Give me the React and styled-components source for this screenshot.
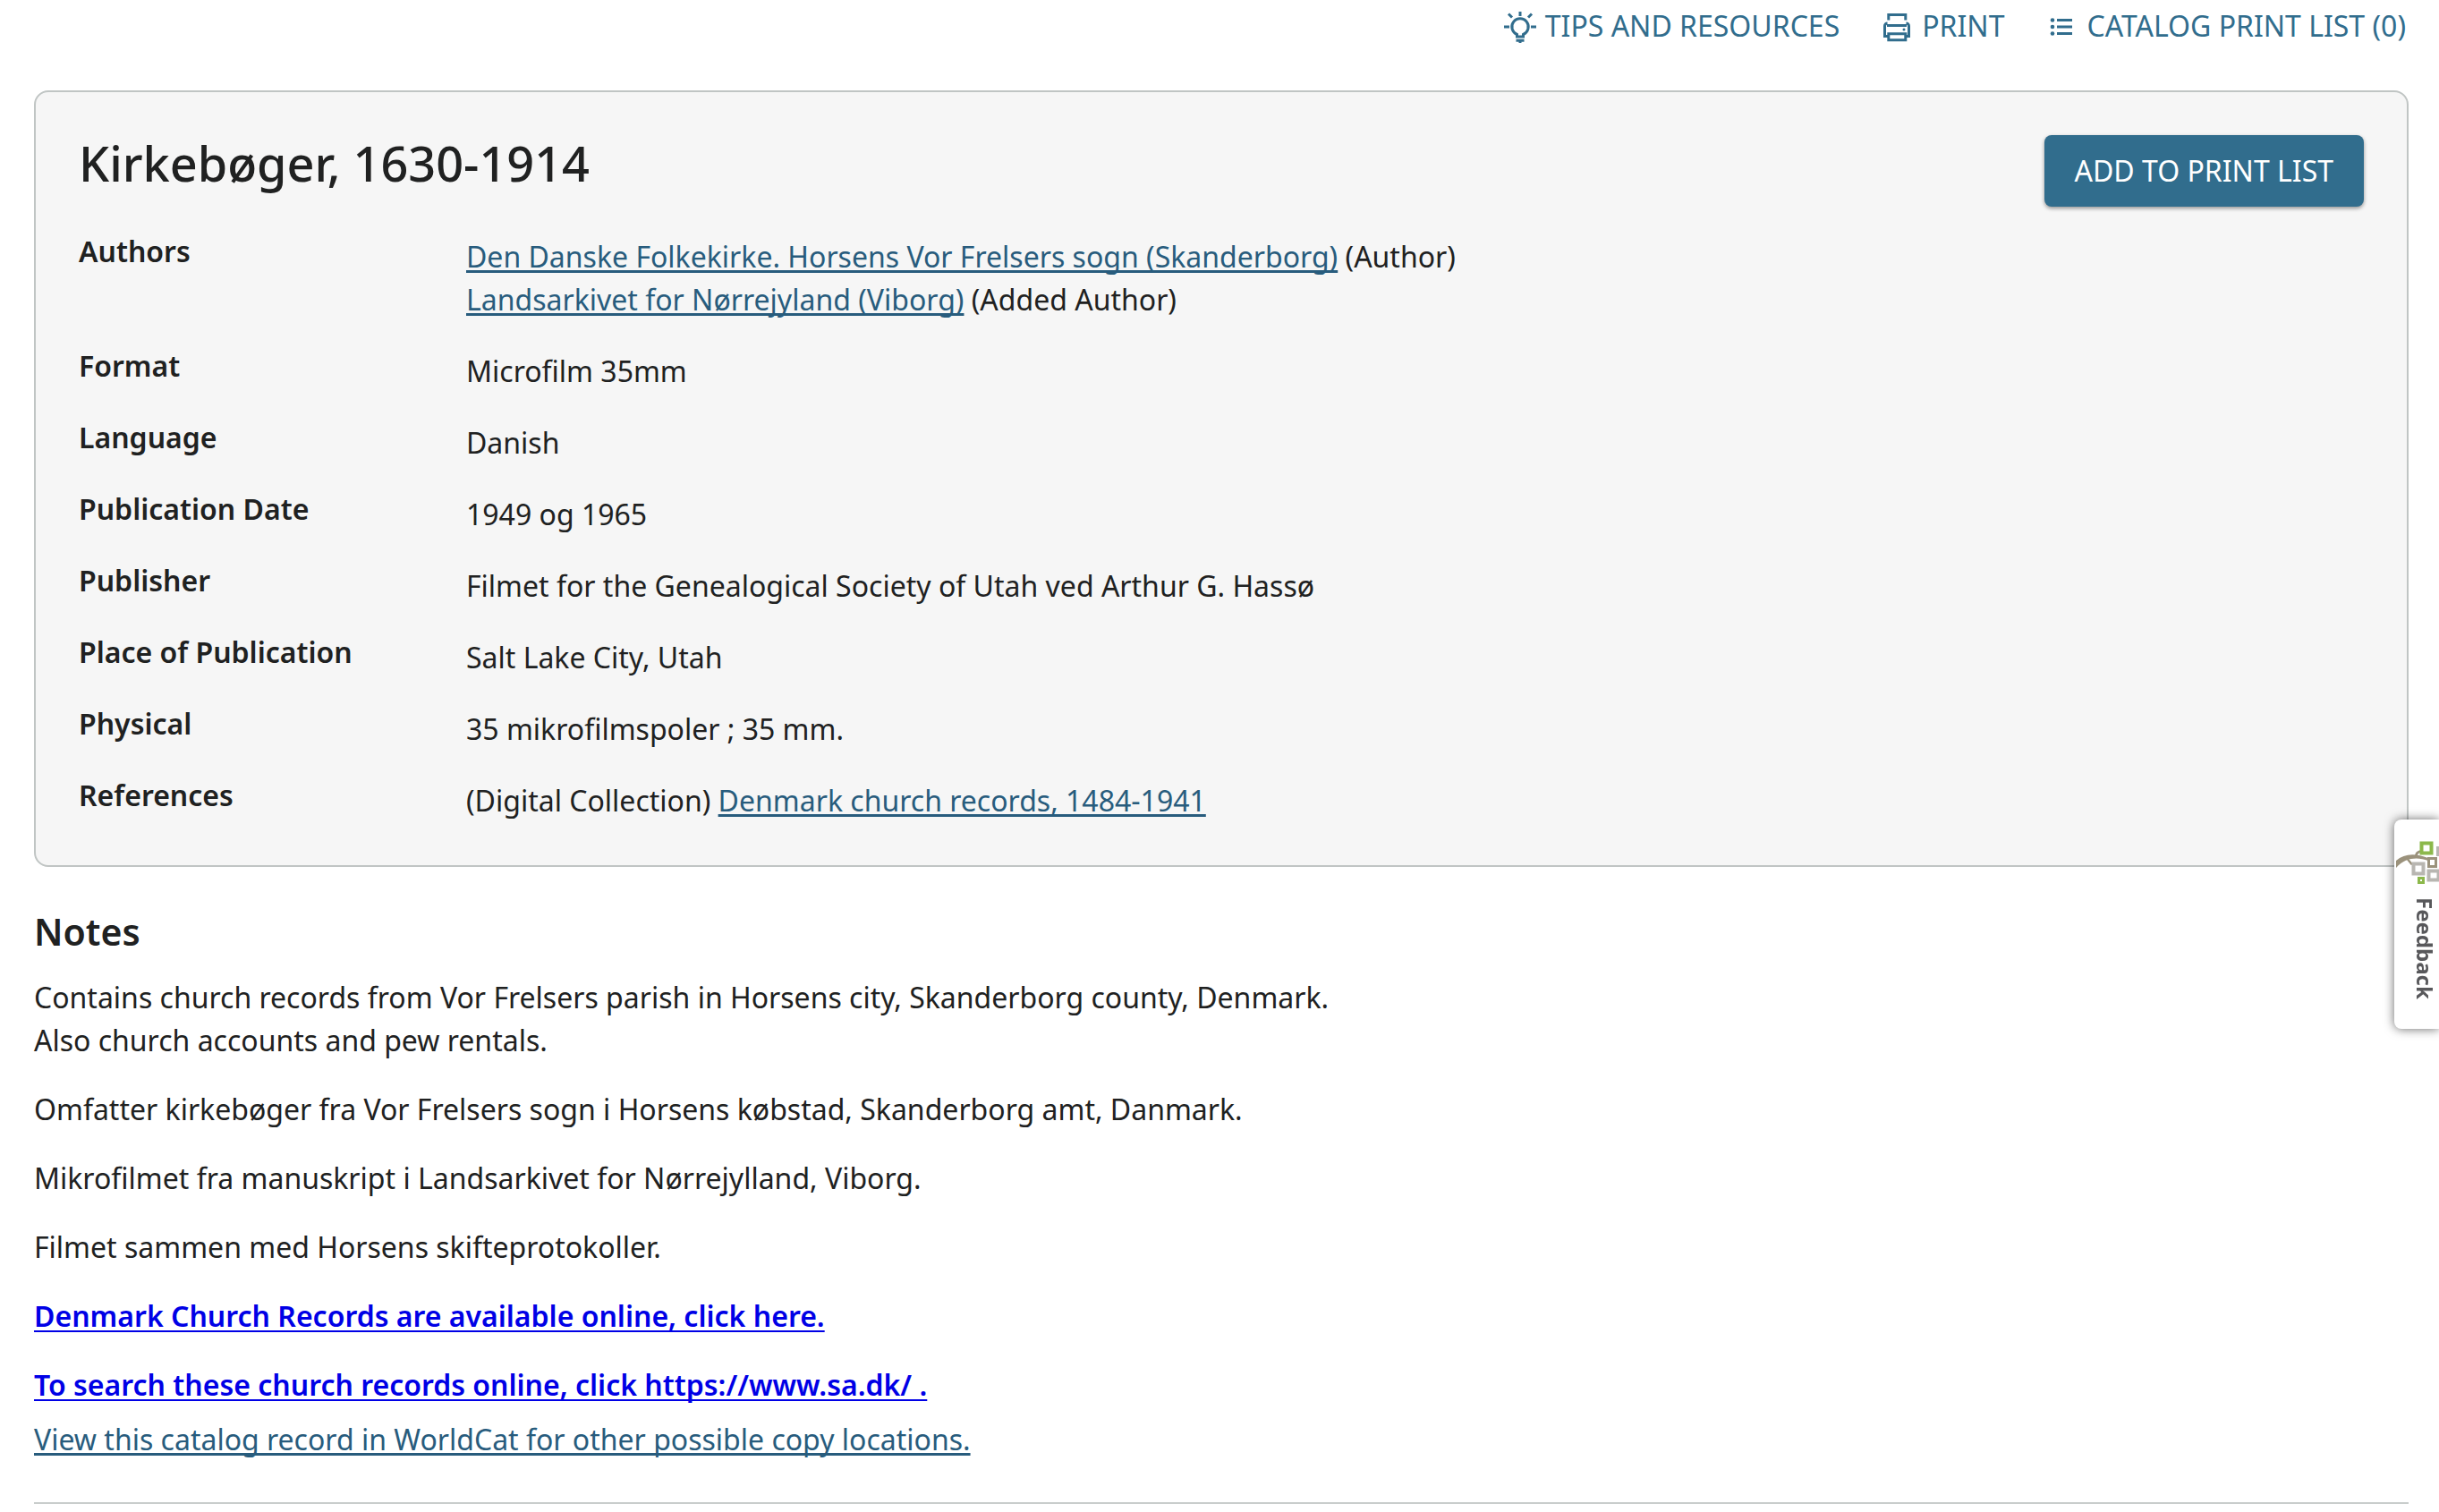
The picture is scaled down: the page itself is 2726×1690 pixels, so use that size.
import React, { useState } from 'react';
import styled, { createGlobalStyle } from 'styled-components';

const GlobalStyle = createGlobalStyle`
    * {
        box-sizing: border-box;
    }

    body {
        margin: 0;
        background: #fff;
        color: #202121;
        font-family: 'Noto Sans', sans-serif;
        font-size: 32px;
        line-height: 48px;
    }
`;

const Page = styled.main`
    padding: 5px 34px 0 38px;
    overflow: hidden;
`;

const Toolbar = styled.nav`
    display: flex;
    justify-content: flex-end;
    gap: 40px;
    margin-bottom: 48px;
    padding-right: 3px;
`;

const ToolbarButton = styled.button`
    display: flex;
    align-items: center;
    gap: 4px;
    padding: 0;
    border: none;
    background: none;
    color: #316d8d;
    font: inherit;
    text-transform: uppercase;
    cursor: pointer;

    svg {
        width: 48px;
        height: 48px;
    }
`;

const Card = styled.section`
    padding: 48px;
    border: 2px solid #c0c5c4;
    border-radius: 16px;
    background: #f6f6f6;
`;

const CardHeader = styled.header`
    display: flex;
    justify-content: space-between;
    align-items: flex-start;
    margin-bottom: 32px;
`;

const Title = styled.h1`
    margin: 0;
    font-size: 54px;
    font-weight: 500;
    line-height: 62px;
`;

const PrimaryButton = styled.button`
    padding: 16px 34px;
    border: none;
    border-radius: 8px;
    background: #316d8d;
    color: #fff;
    font: inherit;
    text-transform: uppercase;
    box-shadow: 0 2px 4px rgba(0, 0, 0, 0.4);
    cursor: pointer;
`;

const Details = styled.dl`
    display: grid;
    gap: 32px;
    margin: 0;
`;

const DetailRow = styled.div`
    display: grid;
    grid-template-columns: 433px 1fr;

    dt {
        font-weight: 600;
        line-height: 36px;
    }

    dd {
        margin: 0;
    }
`;

const Link = styled.a`
    color: #285c7d;
    text-decoration: underline;
    text-decoration-thickness: 3px;
    text-decoration-skip-ink: none;
    text-underline-offset: 3px;
`;

const NoteLink = styled.a`
    color: #0000e6;
    font-weight: 600;
    text-decoration: underline;
    text-decoration-thickness: 2px;
    text-decoration-skip-ink: none;
    text-underline-offset: 4px;
`;

const Notes = styled.section`
    margin-top: 48px;
`;

const NotesTitle = styled.h2`
    margin: 0 0 26px;
    font-size: 41px;
    font-weight: 600;
    line-height: 48px;
`;

const NotesBody = styled.div`
    display: grid;
    gap: 29px;
    margin-bottom: 13px;

    p {
        margin: 0;
    }
`;

const Divider = styled.hr`
    height: 2px;
    margin: 46px 0 0;
    border: none;
    background: #c9cdcc;
`;

// Stays pinned to the right edge, over the page
const FeedbackTab = styled.button`
    position: fixed;
    top: 916px;
    right: 0;
    display: flex;
    flex-direction: column;
    align-items: flex-start;
    gap: 13px;
    width: 50px;
    padding: 24px 0 33px 2px;
    border: none;
    border-radius: 8px 0 0 8px;
    background: #fff;
    color: #58585b;
    font: 700 24px/32px 'Noto Sans', sans-serif;
    box-shadow: 0 0 12px rgba(0, 0, 0, 0.6);
    cursor: pointer;
`;

const FeedbackLabel = styled.span`
    align-self: flex-end;
    writing-mode: vertical-rl;
`;

const TipsIcon = () => (
    <svg viewBox="0 0 48 48" fill="none" stroke="currentColor" strokeWidth="3" aria-hidden="true">
        <path d="M24 8v5M6 25h6M36 25h6M11 10.500l4 4M37 10.500l-4 4" />
        <path d="M20.500 36v-2.500a9.200 9.200 0 1 1 7 0v2.500z" />
        <path d="M19.500 40.300h9M24 40v3" />
    </svg>
);

const PrintIcon = () => (
    <svg viewBox="0 0 48 48" fill="none" stroke="currentColor" strokeWidth="3" aria-hidden="true">
        <path d="M14.800 17.500v-6h19v6" />
        <path d="M15 35.500h-4.500v-11.500a3 3 0 0 1 3-3M34.500 21a3 3 0 0 1 3 3v11.500H33" />
        <path d="M13 23.500h22" />
        <path d="M14.800 39.800v-7h19v7z" />
        <circle cx="32" cy="28" r="1.500" fill="currentColor" stroke="none" />
    </svg>
);

const ListIcon = () => (
    <svg viewBox="0 0 48 48" fill="currentColor" aria-hidden="true">
        <circle cx="14" cy="17.500" r="2.300" />
        <circle cx="14" cy="25" r="2.300" />
        <circle cx="14" cy="32.500" r="2.300" />
        <path d="M19 16h17v3H19zM19 23.500h17v3H19zM19 31h17v3H19z" />
    </svg>
);

const TreeLogo = () => (
    <svg width="48" height="50" viewBox="0 0 48 50" fill="none" aria-hidden="true">
        <path
            d="M0 22C9 14 21 13 36 19v3C24 18 11 18 0 30zM21 16c1-4 3-5 7-6v3c-3 0-4 2-4 4zM11 18c3 1 5 4 8 8l-2 1c-3-3-4-6-8-8z"
            fill="#9b927c"
        />
        <path d="M28.500 2.500h11v11h-11z" fill="#fff" stroke="#8cb84b" strokeWidth="4" />
        <path d="M36.500 19.500h8v9h-8z" fill="#fff" stroke="#9b927c" strokeWidth="3" />
        <path d="M19.500 25.500h11v11h-11zM36.500 33.500h11v10h-11z" fill="#fff" stroke="#b8b6b1" strokeWidth="4" />
        <path d="M46.500 7.500h8v8h-8z" fill="#fff" stroke="#b8b6b1" strokeWidth="3" />
        <path d="M25.500 41.500h5v5h-5z" fill="#fff" stroke="#8cb84b" strokeWidth="3" />
    </svg>
);

const details = [
    {
        label: 'Authors',
        lines: [
            { link: 'Den Danske Folkekirke. Horsens Vor Frelsers sogn (Skanderborg)', after: ' (Author)' },
            { link: 'Landsarkivet for Nørrejyland (Viborg)', after: ' (Added Author)' },
        ],
    },
    { label: 'Format', lines: [{ before: 'Microfilm 35mm' }] },
    { label: 'Language', lines: [{ before: 'Danish' }] },
    { label: 'Publication Date', lines: [{ before: '1949 og 1965' }] },
    { label: 'Publisher', lines: [{ before: 'Filmet for the Genealogical Society of Utah ved Arthur G. Hassø' }] },
    { label: 'Place of Publication', lines: [{ before: 'Salt Lake City, Utah' }] },
    { label: 'Physical', lines: [{ before: '35 mikrofilmspoler ; 35 mm.' }] },
    {
        label: 'References',
        lines: [{ before: '(Digital Collection) ', link: 'Denmark church records, 1484-1941' }],
    },
];

function App() {
    const [printList, setPrintList] = useState([]);

    const handleAdd = () => {
        setPrintList((prevList) => [...prevList, 'Kirkebøger, 1630-1914']);
    };

    return (
        <>
            <GlobalStyle />
            <Page>
                <Toolbar>
                    <ToolbarButton><TipsIcon />Tips and Resources</ToolbarButton>
                    <ToolbarButton onClick={() => window.print()}><PrintIcon />Print</ToolbarButton>
                    <ToolbarButton><ListIcon />Catalog Print List ({printList.length})</ToolbarButton>
                </Toolbar>

                <Card>
                    <CardHeader>
                        <Title>Kirkebøger, 1630-1914</Title>
                        <PrimaryButton onClick={handleAdd}>Add to Print List</PrimaryButton>
                    </CardHeader>
                    <Details>
                        {details.map((detail) => (
                            <DetailRow key={detail.label}>
                                <dt>{detail.label}</dt>
                                <dd>
                                    {detail.lines.map((line, index) => (
                                        <div key={index}>
                                            {line.before}
                                            {line.link && <Link href="#">{line.link}</Link>}
                                            {line.after}
                                        </div>
                                    ))}
                                </dd>
                            </DetailRow>
                        ))}
                    </Details>
                </Card>

                <Notes>
                    <NotesTitle>Notes</NotesTitle>
                    <NotesBody>
                        <p>
                            Contains church records from Vor Frelsers parish in Horsens city, Skanderborg county, Denmark.
                            <br />
                            Also church accounts and pew rentals.
                        </p>
                        <p>Omfatter kirkebøger fra Vor Frelsers sogn i Horsens købstad, Skanderborg amt, Danmark.</p>
                        <p>Mikrofilmet fra manuskript i Landsarkivet for Nørrejylland, Viborg.</p>
                        <p>Filmet sammen med Horsens skifteprotokoller.</p>
                        <p><NoteLink href="#">Denmark Church Records are available online, click here.</NoteLink></p>
                        <p><NoteLink href="#">To search these church records online, click https://www.sa.dk/ .</NoteLink></p>
                    </NotesBody>
                    <Link href="#">View this catalog record in WorldCat for other possible copy locations.</Link>
                </Notes>
                <Divider />
            </Page>

            <FeedbackTab>
                <TreeLogo />
                <FeedbackLabel>Feedback</FeedbackLabel>
            </FeedbackTab>
        </>
    );
}

export default App;
